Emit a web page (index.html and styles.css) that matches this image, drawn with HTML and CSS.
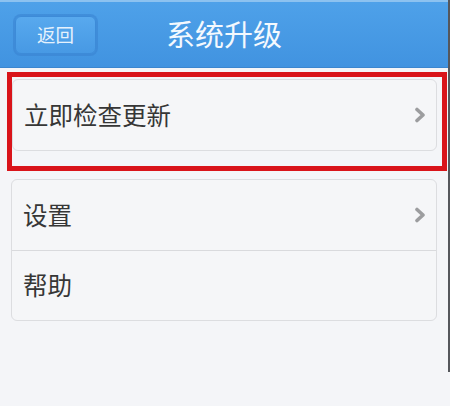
FILE: index.html
```html
<!DOCTYPE html>
<html lang="zh-CN">
<head>
  <meta charset="UTF-8">
  <meta name="viewport" content="width=device-width, initial-scale=1">
  <title>系统升级</title>
  <link rel="stylesheet" href="styles.css">
</head>
<body>

<div class="screen">
  <div class="navbar">
    <button class="back-btn">返回</button>
    <h1 class="nav-title">系统升级</h1>
    <span></span>
  </div>

  <div class="highlight">
    <div class="card">
      <div class="row">
        <span class="row-label">立即检查更新</span>
        <svg class="chevron" width="12" height="16" viewBox="0 0 12 16"><path d="M3 2.5 L9 8 L3 13.5" fill="none" stroke="#9c9d9f" stroke-width="3.6" stroke-linecap="round" stroke-linejoin="round"/></svg>
      </div>
    </div>
  </div>

  <div class="card card-group">
    <div class="row">
      <span class="row-label">设置</span>
      <svg class="chevron" width="12" height="16" viewBox="0 0 12 16"><path d="M3 2.5 L9 8 L3 13.5" fill="none" stroke="#9c9d9f" stroke-width="3.6" stroke-linecap="round" stroke-linejoin="round"/></svg>
    </div>
    <div class="row">
      <span class="row-label">帮助</span>
    </div>
  </div>
</div>

</body>
</html>
```

FILE: styles.css
```css
*, *::before, *::after {
  box-sizing: border-box;
}

body {
  margin: 0;
  background-color: #f4f5f8;
  font-family: "Noto Sans CJK SC", "Noto Sans", sans-serif;
}

.screen {
  width: 450px;
  height: 372px;
  border-right: 2px solid #55575c;
}

.navbar {
  height: 68px;
  display: grid;
  grid-template-columns: 1fr auto 1fr;
  align-items: center;
  background: linear-gradient(#4ea1e9, #4193e0);
  border-top: 2px solid #8cc2f0;
  border-bottom: 1px solid #3b86cf;
}

.back-btn {
  justify-self: start;
  margin-left: 15px;
  width: 81px;
  height: 38px;
  border: 1px solid #3d8bd8;
  border-radius: 6px;
  background: linear-gradient(#58a9ee, #4799e4);
  box-shadow: 0 0 0 2px rgba(56, 130, 208, 0.55);
  color: #e6f2fd;
  font-family: inherit;
  font-size: 18.5px;
  padding: 0;
  line-height: 1;
}

.nav-title {
  margin: 0;
  color: #f4f9fe;
  font-size: 29px;
  font-weight: normal;
  line-height: 1;
  padding-bottom: 2px;
}

.highlight {
  width: 440px;
  margin: 4px 0 0 7px;
  border: 5px solid #d9141a;
  padding: 2px 5px 15px 0;
}

.card {
  background-color: #f5f6f8;
  border: 1px solid #dcdde0;
  border-radius: 6px;
}

.card-group {
  width: 426px;
  margin: 8px 0 0 11px;
}

.row {
  height: 70px;
  display: flex;
  align-items: center;
  justify-content: space-between;
  padding: 0 10px 0 11px;
}

.card-group .row + .row {
  border-top: 1px solid #d9dadd;
}

.row-label {
  color: #363636;
  font-size: 24.5px;
  line-height: 1;
}

.chevron {
  display: block;
}
```
